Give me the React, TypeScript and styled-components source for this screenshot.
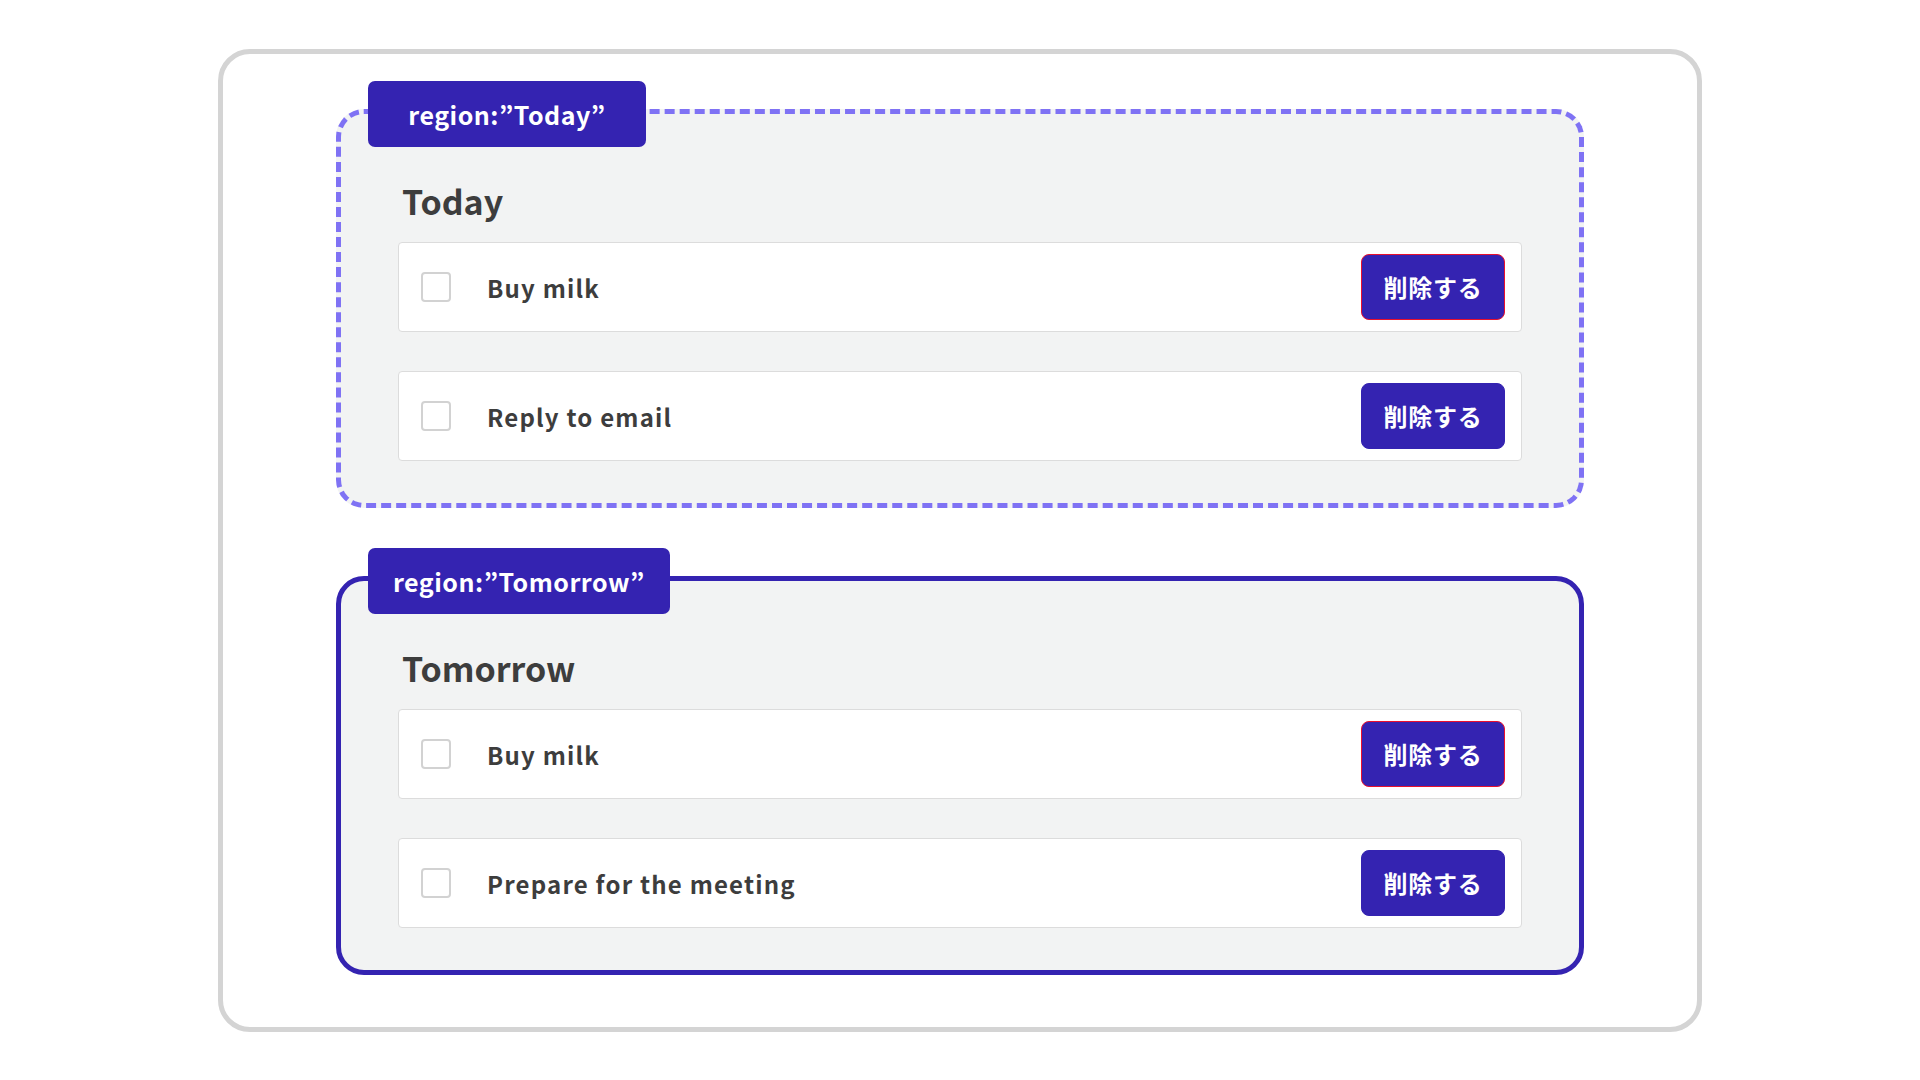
import React from 'react';
import styled, {createGlobalStyle} from 'styled-components';

const BRAND = '#3423b1';
const TEXT = '#3d3d3d';

const data = [
	{
		key: 'today',
		title: 'Today',
		dashed: true,
		items: ['Buy milk', 'Reply to email'],
	},
	{
		key: 'tomorrow',
		title: 'Tomorrow',
		dashed: false,
		items: ['Buy milk', 'Prepare for the meeting'],
	},
];

const GlobalStyle = createGlobalStyle`
	body {
		margin: 0;
		background: #ffffff;
		font-family: 'Noto Sans CJK JP', 'Noto Sans', sans-serif;
		color: ${TEXT};
	}
`;

function App() {
	return (
		<>
			<GlobalStyle />
			<Page>
				<Frame>
					{data.map((region) => (
						<Region key={region.key} dashed={region.dashed}>
							<Label>region:”{region.title}”</Label>
							<Heading>{region.title}</Heading>
							<List>
								{region.items.map((item, i) => (
									<Item key={i}>
										<Checkbox />
										<ItemText>{item}</ItemText>
										<DeleteButton focused={i === 0}>削除する</DeleteButton>
									</Item>
								))}
							</List>
						</Region>
					))}
				</Frame>
			</Page>
		</>
	);
}

export default App;

const Page = styled.div`
	display: flex;
	align-items: center;
	justify-content: center;
	width: 100%;
	min-height: 100vh;
`;

const Frame = styled.div`
	box-sizing: border-box;
	display: flex;
	flex-direction: column;
	gap: 40px;
	width: 1484px;
	padding: 27px 113px 52px;
	border: 5px solid #d4d4d4;
	border-radius: 32px;
	background: #ffffff;
`;

type TRegion = {
	dashed: boolean;
};

const Region = styled.section<TRegion>`
	position: relative;
	box-sizing: border-box;
	margin-top: 28px;
	padding: 0 57px 42px;
	border: 5px ${(props) => (props.dashed ? 'dashed #7f72f4' : `solid ${BRAND}`)};
	border-radius: 28px;
	background: #f2f3f3;
`;

const Label = styled.div`
	position: absolute;
	top: -33px;
	left: 27px;
	box-sizing: border-box;
	min-width: 278px;
	height: 66px;
	padding: 0 25px;
	display: flex;
	align-items: center;
	justify-content: center;
	border-radius: 7px;
	background: ${BRAND};
	color: #ffffff;
	font-size: 25px;
	font-weight: 700;
	letter-spacing: 0.02em;
`;

const Heading = styled.h2`
	margin: 0 0 21px;
	padding: 67px 0 0 4px;
	font-size: 34px;
	line-height: 40px;
	font-weight: 700;
	letter-spacing: 0;
	color: ${TEXT};
`;

const List = styled.div`
	display: flex;
	flex-direction: column;
	gap: 39px;
`;

const Item = styled.div`
	box-sizing: border-box;
	display: flex;
	align-items: center;
	height: 90px;
	padding: 0 16px 0 22px;
	border: 1px solid #dcdcdc;
	border-radius: 4px;
	background: #ffffff;
`;

const Checkbox = styled.span`
	box-sizing: border-box;
	flex: none;
	width: 30px;
	height: 30px;
	border: 2px solid #d2d2d2;
	border-radius: 4px;
	background: #ffffff;
`;

const ItemText = styled.span`
	flex: 1;
	margin-left: 36px;
	padding-top: 3px;
	font-size: 24px;
	line-height: 32px;
	font-weight: 700;
	letter-spacing: 0.05em;
	color: ${TEXT};
`;

type TButton = {
	focused: boolean;
};

const DeleteButton = styled.button<TButton>`
	box-sizing: border-box;
	width: 144px;
	height: 66px;
	border: 1px solid ${(props) => (props.focused ? '#e8102e' : BRAND)};
	border-radius: 8px;
	background: ${BRAND};
	color: #ffffff;
	font-family: inherit;
	font-size: 24px;
	font-weight: 700;
	letter-spacing: 0.03em;
	cursor: pointer;
`;
